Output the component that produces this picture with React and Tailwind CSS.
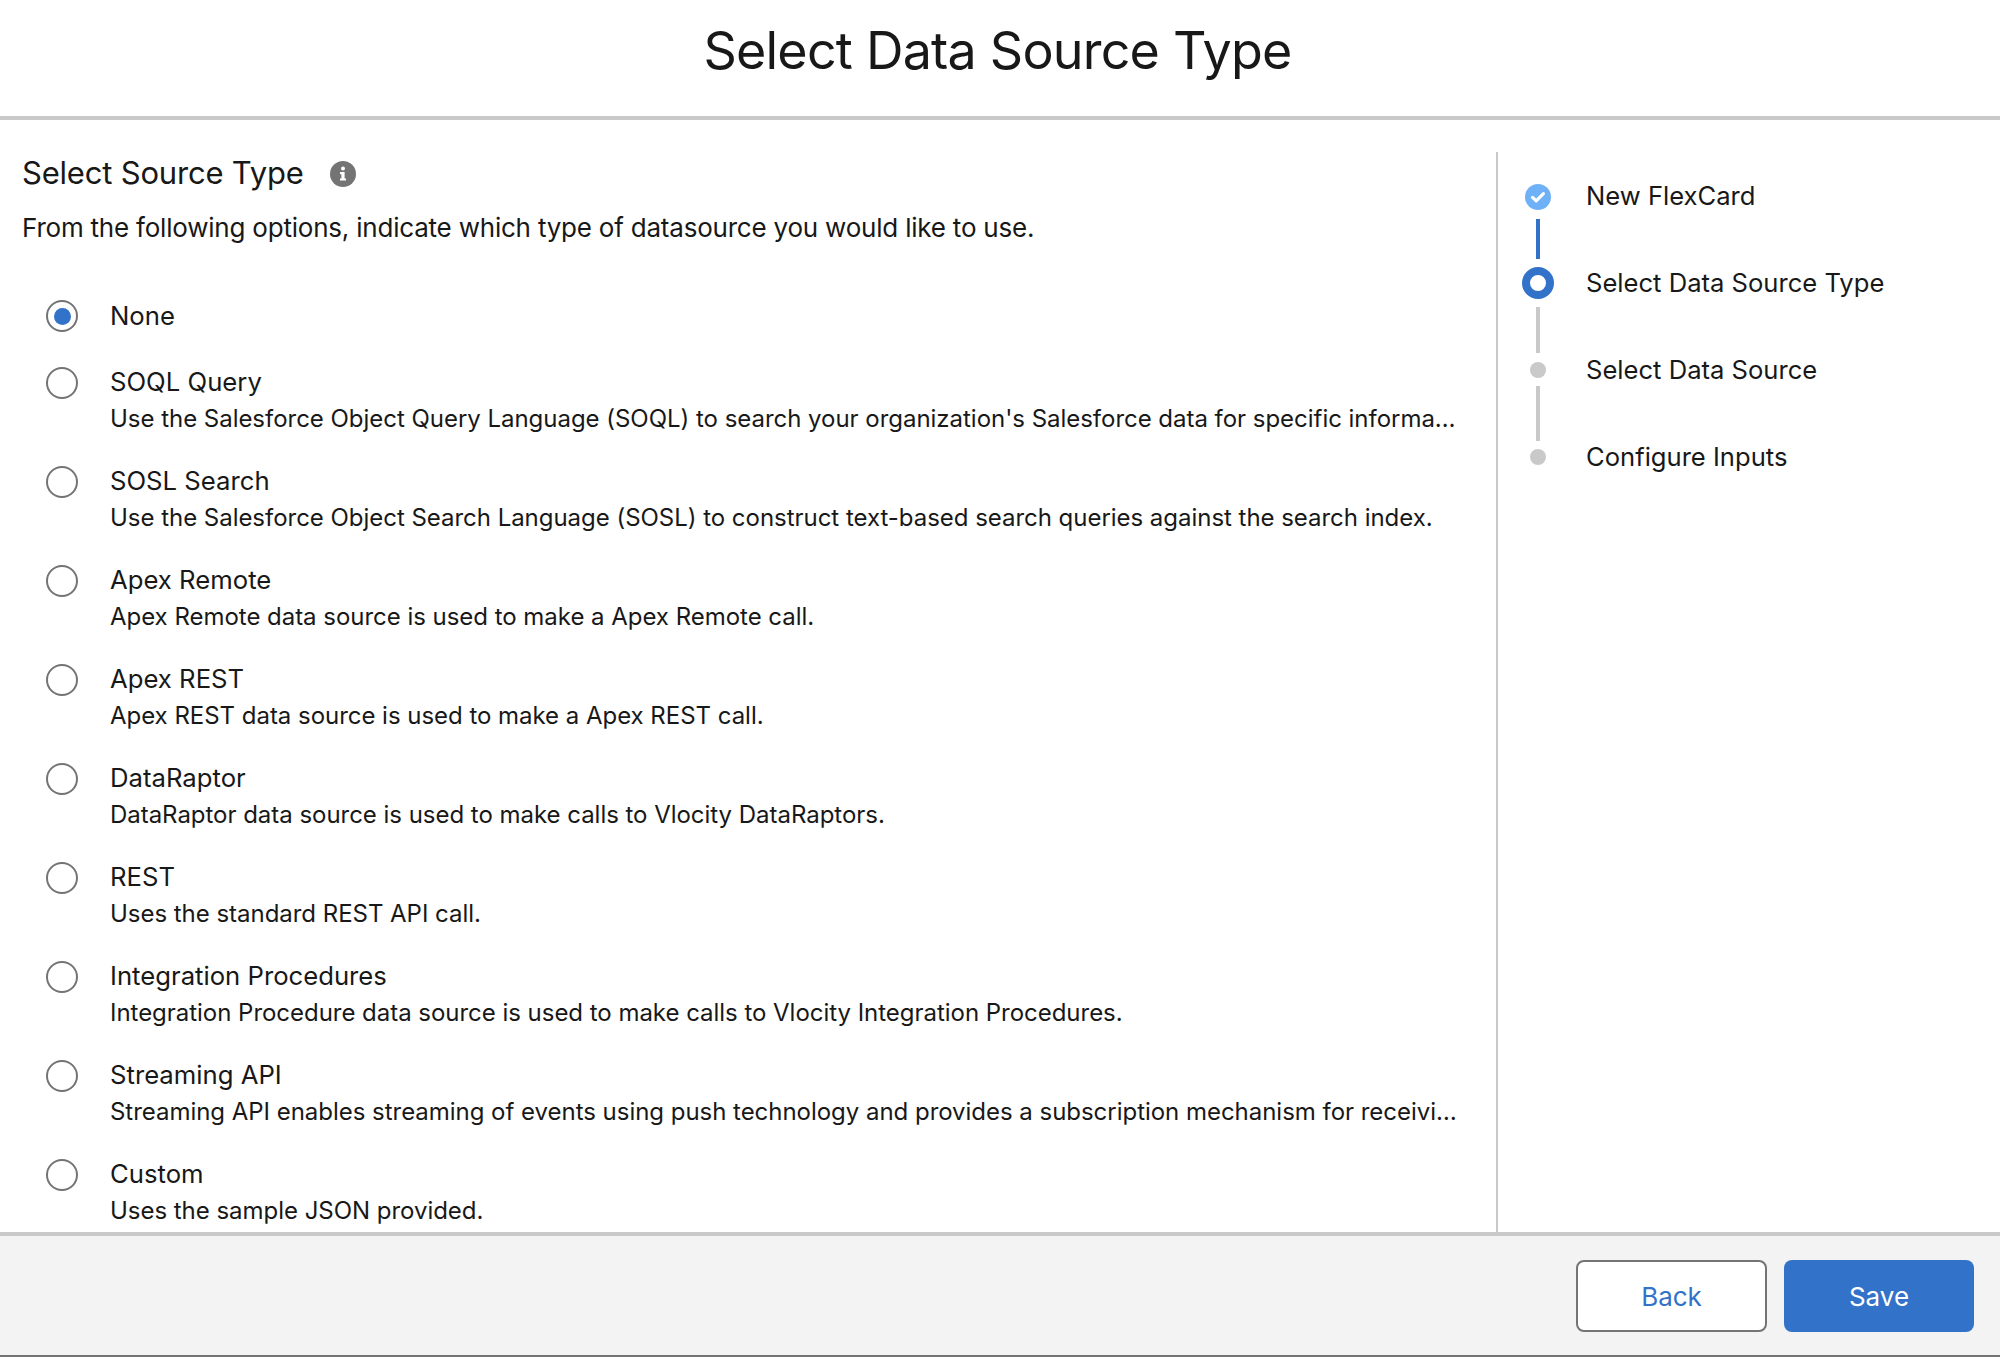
const OPTIONS = [
  { name: "None" },
  { name: "SOQL Query", desc: "Use the Salesforce Object Query Language (SOQL) to search your organization's Salesforce data for specific information." },
  { name: "SOSL Search", desc: "Use the Salesforce Object Search Language (SOSL) to construct text-based search queries against the search index." },
  { name: "Apex Remote", desc: "Apex Remote data source is used to make a Apex Remote call." },
  { name: "Apex REST", desc: "Apex REST data source is used to make a Apex REST call." },
  { name: "DataRaptor", desc: "DataRaptor data source is used to make calls to Vlocity DataRaptors." },
  { name: "REST", desc: "Uses the standard REST API call." },
  { name: "Integration Procedures", desc: "Integration Procedure data source is used to make calls to Vlocity Integration Procedures." },
  { name: "Streaming API", desc: "Streaming API enables streaming of events using push technology and provides a subscription mechanism for receiving data." },
  { name: "Custom", desc: "Uses the sample JSON provided." },
];

function Radio({ checked }) {
  return (
    <span className="flex h-[32px] w-[32px] shrink-0 items-center justify-center rounded-full border-2 border-[#747474] bg-white">
      {checked && <span className="h-[17px] w-[17px] rounded-full bg-[#3272c9]" />}
    </span>
  );
}

function Option({ name, desc }) {
  return (
    <div className={desc ? "flex h-[99px] items-start" : "flex h-[67px] items-start"}>
      <div className="ml-[46px] mt-[3px] mr-[32px]">
        <Radio checked={!desc} />
      </div>
      <div className={desc ? "mt-[-1px] min-w-0 flex-1 pr-[34px] text-[#181818]" : "min-w-0 flex-1 pr-[34px] text-[#181818]"}>
        <div className="text-[25.7px] leading-[38px]">{name}</div>
        {desc && <div className="mt-[-1px] truncate text-[24px] leading-[37px] tracking-[-0.03px]">{desc}</div>}
      </div>
    </div>
  );
}

function Connector({ color, className }) {
  return <span className={`w-[4px] ${color} ${className}`} />;
}

function Step({ label, children }) {
  return (
    <div className="relative flex h-[38px] items-center">
      <span className="flex w-[32px] justify-center">{children}</span>
      <span className="ml-[32px] text-[25.6px] leading-[38px] text-[#181818]">{label}</span>
    </div>
  );
}

export default function App() {
  return (
    <div className="flex h-[1357px] w-[2000px] flex-col overflow-hidden bg-white font-['Inter',sans-serif] text-[#181818]">
      <header className="flex h-[120px] shrink-0 items-center justify-center border-b-4 border-[#c9c9c9] pr-[5px] pb-[14px]">
        <h1 className="text-[52px] leading-[64px] font-normal tracking-[-0.78px]">Select Data Source Type</h1>
      </header>

      <main className="flex min-h-0 flex-1 pt-[32px]">
        <section className="w-[1498px] shrink-0 overflow-hidden border-r-2 border-[#c9c9c9]">
          <div className="flex h-[42px] items-center pl-[22px]">
            <h2 className="text-[31px] leading-[42px] font-normal tracking-[-0.2px]">Select Source Type</h2>
            <svg className="ml-[26px] mt-[2px]" width="26" height="26" viewBox="0 0 26 26">
              <circle cx="13" cy="13" r="13" fill="#747474" />
              <circle cx="13" cy="7.6" r="2" fill="#fff" />
              <path d="M10 11h4.6v6.4h1.4v2.2h-6v-2.2h1.4v-4.2h-1.4z" fill="#fff" />
            </svg>
          </div>
          <p className="mt-[15px] pl-[22px] text-[26px] leading-[38px] tracking-[-0.21px]">
            From the following options, indicate which type of datasource you would like to use.
          </p>
          <div className="mt-[50px]">
            {OPTIONS.map((o) => (
              <Option key={o.name} {...o} />
            ))}
          </div>
        </section>

        <aside className="flex-1 pl-[24px] pt-[25px]">
          <Step label="New FlexCard">
            <svg className="mt-[2px]" width="26" height="26" viewBox="0 0 26 26">
              <circle cx="13" cy="13" r="13" fill="#6fb1f7" />
              <path d="M7.6 13.4l3.6 3.5 7.2-7.2" fill="none" stroke="#fff" strokeWidth="3.2" strokeLinecap="round" strokeLinejoin="round" />
            </svg>
          </Step>
          <div className="flex h-[49px] w-[32px] items-start justify-center"><Connector color="bg-[#3272c9]" className="mt-[4px] h-[40px]" /></div>
          <Step label="Select Data Source Type">
            <span className="h-[32px] w-[32px] rounded-full border-[8px] border-[#3272c9] bg-white" />
          </Step>
          <div className="flex h-[49px] w-[32px] items-start justify-center"><Connector color="bg-[#c9c9c9]" className="mt-[5px] h-[46px]" /></div>
          <Step label="Select Data Source">
            <span className="h-[16px] w-[16px] rounded-full bg-[#c9c9c9]" />
          </Step>
          <div className="flex h-[49px] w-[32px] items-start justify-center"><Connector color="bg-[#c9c9c9]" className="mt-[-3px] h-[55px]" /></div>
          <Step label="Configure Inputs">
            <span className="h-[16px] w-[16px] rounded-full bg-[#c9c9c9]" />
          </Step>
        </aside>
      </main>

      <footer className="flex h-[125px] shrink-0 items-start justify-end gap-[17px] border-t-4 border-b-2 border-t-[#c9c9c9] border-b-[#747474] bg-[#f3f3f3] pt-[24px] pr-[26px]">
        <button className="h-[72px] w-[191px] rounded-[8px] border-2 border-[#747474] bg-white pt-[1px] text-[26px] text-[#3272c9]">Back</button>
        <button className="h-[72px] w-[190px] rounded-[8px] bg-[#3272c9] pt-[1px] text-[26px] text-white">Save</button>
      </footer>
    </div>
  );
}
